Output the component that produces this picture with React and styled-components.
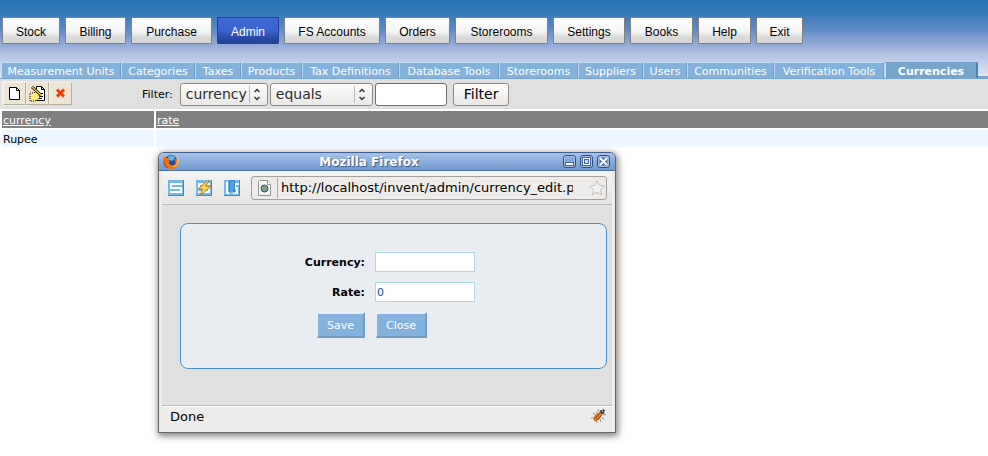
import React from "react";
import styled, { createGlobalStyle } from "styled-components";

const tabFont = '"DejaVu Sans", Verdana, sans-serif';
const menuFont = '"Liberation Sans", Arial, sans-serif';

const GlobalStyle = createGlobalStyle`
  *, *::before, *::after { box-sizing: border-box; }
  body { margin: 0; background: #fff; color: #000; font: 11px/17px ${tabFont}; }
  button, input, select { font: inherit; margin: 0; }
  svg { display: block; flex: none; }
`;

const Page = styled.div`
  position: relative;
  min-height: 100vh;
  overflow-x: clip;
`;

const Header = styled.header`
  background: linear-gradient(#2873b4 0, #3378b9 12px, #5b89c4 28px, #8ba5d4 42px, #bac8e7 58px, #dfe7f6 77px);
`;

const Menu = styled.nav`
  display: flex;
  gap: 5px;
  padding: 17px 2px 18px;
`;

const MenuButton = styled.button`
  width: ${(p) => p.$width}px;
  height: 27px;
  padding: 2px 0 0;
  border: 1px solid ${(p) => (p.$active ? "#26408e" : "#808080")};
  border-radius: 1px;
  background: ${(p) =>
    p.$active
      ? "linear-gradient(#3f6ad8 0, #3a64d0 50%, #2a4da8 75%, #24439a 100%)"
      : "linear-gradient(#fff 0, #f4f4f4 55%, #d8d8d8 78%, #d6d6d6 100%)"};
  color: ${(p) => (p.$active ? "#fff" : "#000")};
  font: 12px/16px ${menuFont};
  white-space: nowrap;
`;

const Tabs = styled.nav`
  display: flex;
  padding-left: 1px;
  border-bottom: 1px solid #76a5cd;
`;

const Tab = styled.a`
  flex: none;
  width: ${(p) => p.$width}px;
  height: 16px;
  border-top: 1px solid #c3dcf7;
  border-left: 1px solid #bedaf7;
  border-right: 1px solid #6f9dc8;
  background: #84b2dc;
  color: #fff;
  line-height: 17px;
  text-align: center;
  text-decoration: none;
  white-space: nowrap;
`;

const ActiveTab = styled(Tab)`
  border-top-color: #6f9dc8;
  border-left: 2px solid #c8dcf8;
  border-right: 2px solid #4f80b4;
  background: #76a5cc;
  font-weight: bold;
`;

const TabRule = styled.span`
  flex: 1;
  border-bottom: 2px solid #76a5cd;
`;

const Toolbar = styled.div`
  display: flex;
  align-items: center;
  height: 30px;
  padding: 0 3px;
  background: #e0e0e0;
`;

const IconButton = styled.button`
  display: grid;
  place-items: center;
  width: 23px;
  height: 23px;
  margin-bottom: 2px;
  padding: 0;
  border: 1px solid;
  border-color: #f6f1e6 #b5ae9e #b5ae9e #f6f1e6;
  background: #ece4d5;
  outline: ${(p) => (p.$focused ? "1px dotted #fff" : "none")};
`;

const FilterForm = styled.form`
  display: flex;
  align-items: center;
  margin-left: 70px;
`;

const FilterLabel = styled.label`
  margin-right: 7px;
`;

const SelectWrap = styled.span`
  position: relative;
  width: ${(p) => (p.$wide ? "103px" : "88px")};
  margin-right: 2px;
  svg { position: absolute; right: 3px; top: 3px; pointer-events: none; }
`;

const Select = styled.select`
  appearance: none;
  display: block;
  width: 100%;
  height: 23px;
  padding: 0 5px;
  border: 1px solid #8e8a86;
  border-radius: 3px;
  background: linear-gradient(#fdfdfd, #e9e8e6);
  color: #2b2b2b;
  font-size: 14px;
  line-height: 20px;
`;

const FilterInput = styled.input`
  width: 72px;
  height: 23px;
  margin-right: 6px;
  border: 1px solid #716d69;
  border-radius: 3px;
  background: #fff;
`;

const FilterButton = styled.button`
  height: 23px;
  padding: 0 10px;
  border: 1px solid #8e8a86;
  border-radius: 3px;
  background: linear-gradient(#fff, #e8e7e5);
  font-size: 14px;
  line-height: 20px;
`;

const DataTable = styled.table`
  width: calc(100% + 2px);
  border-collapse: separate;
  border-spacing: 2px;
  table-layout: fixed;
  th, td { height: 17px; padding: 2px 1px 0; text-align: left; font-weight: normal; line-height: 15px; }
  th { background: #808080; }
  th:first-child { width: 152px; }
  td { background: #eef7ff; }
  a { color: #fff; }
`;

const Popup = styled.section`
  position: absolute;
  left: 158px;
  top: 152px;
  width: 458px;
  border: 1px solid #666;
  border-top-color: #3f6190;
  border-radius: 6px 6px 0 0;
  background: #edecea;
  box-shadow: 1px 2px 7px 1px rgba(0, 0, 0, 0.5);
`;

const TitleBar = styled.header`
  display: flex;
  align-items: center;
  height: 18px;
  padding: 0 5px 0 4px;
  border-bottom: 1px solid #496fa5;
  border-radius: 5px 5px 0 0;
  background: linear-gradient(#a6c2eb, #7199cd);
`;

const Title = styled.h1`
  flex: 1;
  margin: 0;
  padding-right: 4px;
  color: #fff;
  font: bold 12px/16px ${tabFont};
  text-align: center;
  text-shadow: 1px 1px 1px #33588b;
`;

const WindowButtons = styled.div`
  display: flex;
  gap: 4px;
`;

const WindowButton = styled.button`
  width: 13px;
  height: 13px;
  padding: 0;
  border: 0;
  background: none;
`;

const PopupBody = styled.div`
  padding: 0 3px 1px;
`;

const BrowserBar = styled.div`
  display: flex;
  align-items: center;
  gap: 12px;
  height: 34px;
  padding: 0 5px 0 6px;
  border-bottom: 1px solid #bdbbb8;
  background: linear-gradient(#f5f4f3, #e7e5e3);
`;

const AddressBox = styled.label`
  display: flex;
  flex: 1;
  align-items: center;
  height: 24px;
  min-width: 0;
  margin-left: -1px;
  padding: 0 1px 0 6px;
  border: 1px solid #a3a09d;
  border-radius: 3px;
  background: #edecea;
`;

const Address = styled.input`
  flex: 1;
  min-width: 0;
  height: 20px;
  margin: 0 16px 0 5px;
  padding: 0 0 0 3px;
  border: 0;
  border-left: 1px solid #aaa7a3;
  background: none;
  color: #000;
  font-size: 13px;
`;

const Content = styled.main`
  padding: 18px 5px 36px 18px;
  border-bottom: 1px solid #bdbbb8;
  background: #e0e0e0;
`;

const EditForm = styled.form`
  display: grid;
  grid-template-columns: 184px 1fr;
  column-gap: 10px;
  row-gap: 10px;
  align-items: center;
  padding: 28px 0 30px;
  border: 1px solid #4a90cc;
  border-radius: 8px;
  background: #e9edf2;
`;

const FieldLabel = styled.label`
  font-weight: bold;
  text-align: right;
`;

const Field = styled.input`
  width: 100px;
  height: 20px;
  padding: 1px;
  border: 1px solid #add8e6;
  background: #fff;
  color: #1c5190;
  font-size: 11px;
`;

const FormButton = styled.button`
  justify-self: ${(p) => (p.$end ? "end" : "start")};
  height: 26px;
  margin-left: 1px;
  padding: 1px 9px 0;
  border: 2px solid;
  border-color: #e9edf2 #709cc5 #709cc5 #e9edf2;
  border-left-width: 1px;
  background: #84b2dc;
  color: #fff;
  font-size: 11px;
`;

const StatusBar = styled.footer`
  display: flex;
  align-items: center;
  justify-content: space-between;
  height: 25px;
  padding: 0 5px 5px 8px;
  border-top: 1px solid #fff;
  font-size: 13px;
`;

const menuItems = [
  ["Stock", 58],
  ["Billing", 61],
  ["Purchase", 81],
  ["Admin", 62],
  ["FS Accounts", 96],
  ["Orders", 65],
  ["Storerooms", 93],
  ["Settings", 72],
  ["Books", 63],
  ["Help", 53],
  ["Exit", 47],
];

const tabItems = [
  ["Measurement Units", 120],
  ["Categories", 74],
  ["Taxes", 46],
  ["Products", 61],
  ["Tax Definitions", 97],
  ["Database Tools", 100],
  ["Storerooms", 79],
  ["Suppliers", 65],
  ["Users", 44],
  ["Communities", 87],
  ["Verification Tools", 110],
];

const NewIcon = () => (
  <svg width="13" height="15" viewBox="0 0 13 15">
    <path d="M1.500 1.500h7l3 3v9h-10z" fill="#fff" stroke="#000" />
    <path d="M8.500 1.500v3h3" fill="none" stroke="#000" />
  </svg>
);

const EditIcon = () => (
  <svg width="17" height="17" viewBox="0 0 17 17">
    <path d="M7.500 1.500h5l3 3v11h-8z" fill="#fff" stroke="#000" />
    <path d="M12.500 1.500v3h3M10 11.500h4M9 13.500h4M12 8.500h2" fill="none" stroke="#000" />
    <path d="M1 8h3l4-1 3 2-1 2 1 1-2 3-4 1H1z" fill="#ffef7a" stroke="#000" strokeDasharray="1 1" />
    <path d="M3 2l9 8" stroke="#000" strokeWidth="3" />
    <path d="M3 2l9 8" stroke="#ffc43c" strokeWidth="1.500" />
  </svg>
);

const DeleteIcon = () => (
  <svg width="11" height="10" viewBox="0 0 11 10">
    <path d="M2 1.500l7 7M9 1.500l-7 7" stroke="#fb3405" strokeWidth="2.800" />
  </svg>
);

const Arrows = () => (
  <svg width="16" height="17" viewBox="0 0 16 17">
    <path d="M.5 0v17" stroke="#bbb8b4" />
    <path d="M5.500 6l2.500-2.500L10.500 6M5.500 11l2.500 2.500 2.500-2.500" fill="none" stroke="#333" strokeWidth="1.500" />
  </svg>
);

const FirefoxIcon = () => (
  <svg width="16" height="16" viewBox="0 0 16 16">
    <circle cx="8" cy="7.500" r="6.500" fill="#234a91" />
    <path d="M5 3c2-2 6-2 7 1l-2 3-4-1z" fill="#62b4e8" />
    <path d="M1.500 2l2 2 3 .5-1 2 2 1-2 1c1 3 5 4 7 1l-.5-5 2 1 0-2c3 5 1 11.500-6 11.500C1 15-1.500 8 1.500 2z" fill="#ee7414" />
    <path d="M12 2c4 4 2 10-3 11 4 1 6.500-3 6.500-6S14 3 12 2z" fill="#ffc435" />
    <path d="M1.500 5c-1 5 2 8.500 5 9.500-5 0-7.500-5-5-9.500z" fill="#b23c12" />
  </svg>
);

const ScriptIcon = ({ kind }) => (
  <svg width="16" height="16" viewBox="0 0 16 16">
    <rect width="16" height="16" fill="#6fbbe4" />
    <path d="M0 15.500h15.500V0" fill="none" stroke="#4389b7" />
    {kind === "bookmark" ? (
      <>
        <path d="M3 2v11h3M15 4h-4v4h2v5H9" fill="none" stroke="#fff" strokeWidth="2" />
        <path d="M5.500.5h5v12L8 10l-2.500 2.500z" fill="#4fa0e6" stroke="#3e82c6" />
      </>
    ) : (
      <path d="M14 4H3v4h10v4H2" fill="none" stroke="#fff" strokeWidth="2" />
    )}
    {kind === "flash" && (
      <path d="M11.500.5L2 9h4.500l-2 6.500L15 6H9.500l3.500-5z" fill="#ffd65a" stroke="#a57b32" />
    )}
  </svg>
);

const PageIcon = () => (
  <svg width="14" height="16" viewBox="0 0 14 16">
    <path d="M1.500.5h8l3 4v11h-12V1.500z" fill="#f7f7f5" stroke="#94928e" />
    <path d="M9.500.5v4h3" fill="#fff" stroke="#94928e" />
    <circle cx="6.500" cy="8.500" r="3.500" fill="#759cc4" stroke="#254c83" />
    <path d="M5 7l3-1 1 3-2 2-3-2z" fill="#8aa84a" />
  </svg>
);

const StarIcon = () => (
  <svg width="16" height="16" viewBox="0 0 16 16">
    <path d="M8 .5l2.200 4.800 5.300.7-4 3.700 1.200 5.300L8 12.300 3.300 15l1.200-5.300L.5 6l5.300-.7z" fill="#f1f0ef" stroke="#c6c3c0" />
  </svg>
);

const BugIcon = () => (
  <svg width="17" height="17" viewBox="0 0 17 17">
    <path d="M3 5l4 3M1 10h5M6 11l1 4M8 1l2 5M12 9l2 3M11 6l5 1M8 4l-2 1M10 11l1 3" stroke="#a2937f" />
    <ellipse cx="7.500" cy="9" rx="3" ry="5" transform="rotate(42 7.500 9)" fill="#e77820" />
    <path d="M4 11l6-6M6 13l6-6" stroke="#8a4a1c" />
    <circle cx="12.500" cy="3.500" r="2.500" fill="#444" />
    <path d="M9.500 1.500h3M15 3v2.500M12 3h1" stroke="#fff" />
  </svg>
);

const ControlIcon = ({ kind }) => (
  <svg width="13" height="13" viewBox="0 0 13 13">
    <rect x=".5" y=".5" width="12" height="12" rx="2.500" fill="#83a9da" stroke="#2b5188" />
    <rect x="1.500" y="1.500" width="10" height="10" rx="1.500" fill="none" stroke="#a4c0e8" />
    {kind === "minimize" && (
      <>
        <rect x="2" y="7" width="9" height="4" fill="#4268a0" />
        <path d="M3 9h7" stroke="#fff" strokeWidth="2" />
      </>
    )}
    {kind === "maximize" && (
      <>
        <rect x="2" y="2" width="9" height="9" fill="#4268a0" />
        <rect x="3.500" y="3.500" width="6" height="6" fill="#4268a0" stroke="#fff" />
        <rect x="5" y="5" width="3" height="3" fill="#c3d6f0" />
      </>
    )}
    {kind === "close" && (
      <>
        <path d="M3.500 3.500l6 6M9.500 3.500l-6 6" stroke="#3f659d" strokeWidth="4" />
        <path d="M3 3l7 7M10 3l-7 7" stroke="#fff" strokeWidth="2" />
      </>
    )}
  </svg>
);

const keepPage = (e) => e.preventDefault();

export default function App() {
  return (
    <Page>
      <GlobalStyle />
      <Header>
        <Menu>
          {menuItems.map(([item, width]) => (
            <MenuButton key={item} $width={width} $active={item === "Admin"}>{item}</MenuButton>
          ))}
        </Menu>
        <Tabs>
          {tabItems.map(([item, width]) => (
            <Tab key={item} href="#" $width={width}>{item}</Tab>
          ))}
          <ActiveTab href="#" $width={94} aria-current="page">Currencies</ActiveTab>
          <TabRule />
        </Tabs>
      </Header>
      <Toolbar>
        <IconButton aria-label="New" $focused><NewIcon /></IconButton>
        <IconButton aria-label="Edit"><EditIcon /></IconButton>
        <IconButton aria-label="Delete"><DeleteIcon /></IconButton>
        <FilterForm onSubmit={keepPage}>
          <FilterLabel htmlFor="filter-column">Filter:</FilterLabel>
          <SelectWrap>
            <Select id="filter-column"><option>currency</option><option>rate</option></Select>
            <Arrows />
          </SelectWrap>
          <SelectWrap $wide>
            <Select aria-label="Condition"><option>equals</option></Select>
            <Arrows />
          </SelectWrap>
          <FilterInput aria-label="Filter value" />
          <FilterButton>Filter</FilterButton>
        </FilterForm>
      </Toolbar>
      <DataTable>
        <thead>
          <tr>
            <th><a href="#">currency</a></th>
            <th><a href="#">rate</a></th>
          </tr>
        </thead>
        <tbody>
          <tr><td>Rupee</td><td /></tr>
        </tbody>
      </DataTable>
      <Popup>
        <TitleBar>
          <FirefoxIcon />
          <Title>Mozilla Firefox</Title>
          <WindowButtons>
            {["minimize", "maximize", "close"].map((kind) => (
              <WindowButton key={kind} aria-label={kind}><ControlIcon kind={kind} /></WindowButton>
            ))}
          </WindowButtons>
        </TitleBar>
        <PopupBody>
          <BrowserBar>
            <ScriptIcon />
            <ScriptIcon kind="flash" />
            <ScriptIcon kind="bookmark" />
            <AddressBox>
              <PageIcon />
              <Address aria-label="Address" defaultValue="http://localhost/invent/admin/currency_edit.php" />
              <StarIcon />
            </AddressBox>
          </BrowserBar>
          <Content>
            <EditForm onSubmit={keepPage}>
              <FieldLabel htmlFor="currency">Currency:</FieldLabel>
              <Field id="currency" />
              <FieldLabel htmlFor="rate">Rate:</FieldLabel>
              <Field id="rate" defaultValue="0" />
              <FormButton $end>Save</FormButton>
              <FormButton type="button">Close</FormButton>
            </EditForm>
          </Content>
          <StatusBar>
            <span>Done</span>
            <BugIcon />
          </StatusBar>
        </PopupBody>
      </Popup>
    </Page>
  );
}
